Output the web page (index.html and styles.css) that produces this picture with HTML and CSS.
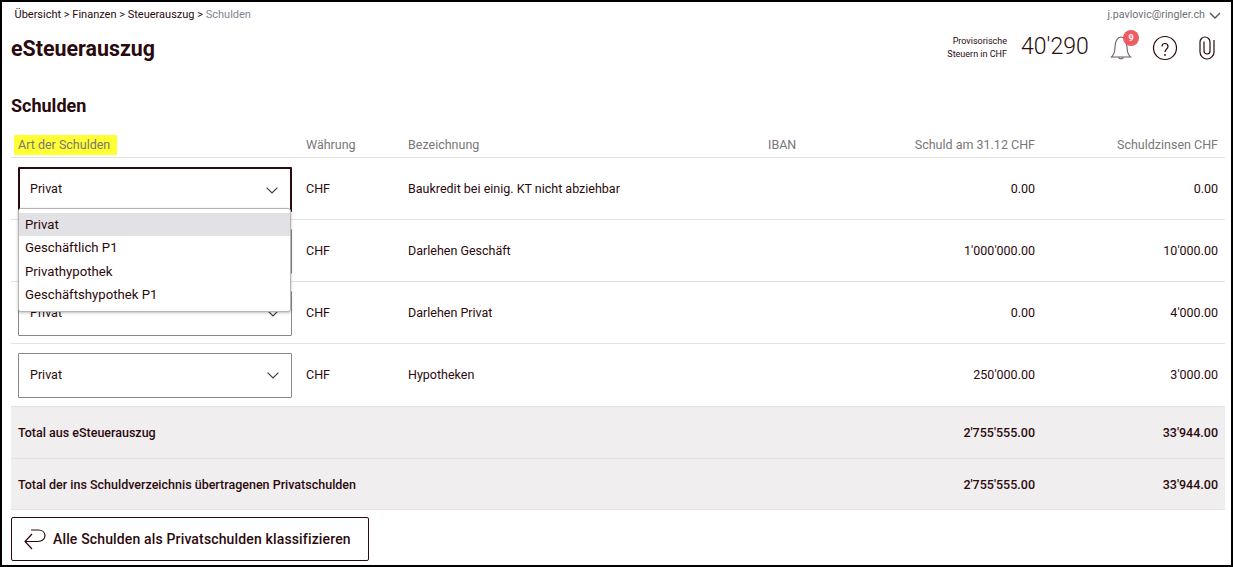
FILE: index.html
```html
<!DOCTYPE html>
<html lang="de">
<head>
<meta charset="utf-8">
<title>eSteuerauszug</title>
<link rel="stylesheet" href="styles.css">
</head>
<body>
<div class="frame">
  <header class="top">
    <div class="top-left">
      <nav class="crumbs">Übersicht &gt; Finanzen &gt; Steuerauszug &gt; <span class="crumb-current">Schulden</span></nav>
      <h1 class="title">eSteuerauszug</h1>
    </div>
    <div class="top-right">
      <div class="user">j.pavlovic@ringler.ch
        <svg class="user-chevron" width="12" height="7" viewBox="0 0 12 7"><path d="M1 1l5 5 5-5" fill="none" stroke="#555" stroke-width="1.4"/></svg>
      </div>
      <div class="tools">
        <div class="tax-label">Provisorische<br>Steuern in CHF</div>
        <div class="tax-value">40'290</div>
        <div class="bell">
          <svg width="26" height="28" viewBox="0 0 26 28"><path d="M2.500 24c2.500-2.500 3.500-5 3.500-10 0-5.500 2.500-10 6-10s6 4.500 6 10c0 5 1 7.500 3.500 10z M9.500 24c.3 2.500 4.700 2.500 5 0" fill="none" stroke="#6b5f60" stroke-width="1.100"/></svg>
          <span class="badge">9</span>
        </div>
        <svg class="help" width="26" height="26" viewBox="0 0 26 26"><circle cx="13" cy="13" r="11.500" fill="none" stroke="#2b0a0d" stroke-width="1.200"/><path d="M10 11.500c0-2 1.300-3 3-3s3 1.200 3 3c0 2.500-3 2.500-3 5.500" fill="none" stroke="#2b0a0d" stroke-width="1.200"/><circle cx="13" cy="20" r=".9" fill="#2b0a0d"/></svg>
        <svg class="clip" width="16" height="24" viewBox="0 0 16 24"><path d="M15 4v12a7 7 0 0 1-14 0V6a5 5 0 0 1 10 0v9a3 3 0 0 1-6 0V5.500" fill="none" stroke="#2b0a0d" stroke-width="1.200"/></svg>
      </div>
    </div>
  </header>

  <h2 class="section">Schulden</h2>

  <div class="table">
    <div class="row head">
      <div class="cell first"><span class="mark">Art der Schulden</span></div>
      <div class="cell">Währung</div>
      <div class="cell">Bezeichnung</div>
      <div class="cell iban">IBAN<span class="num">Schuld am 31.12 CHF</span></div>
      <div class="cell num last">Schuldzinsen CHF</div>
    </div>
    <div class="row body">
      <div class="cell first"><div class="select open">Privat<svg class="chev" width="12" height="7" viewBox="0 0 12 7"><path d="M.6.6L6 6 11.400.6" fill="none" stroke="#4a3a3c" stroke-width="1.200"/></svg></div></div>
      <div class="cell">CHF</div>
      <div class="cell wide">Baukredit bei einig. KT nicht abziehbar</div>
      <div class="cell num">0.00</div>
      <div class="cell num last">0.00</div>
    </div>
    <div class="row body">
      <div class="cell first"><div class="select">Privat<svg class="chev" width="12" height="7" viewBox="0 0 12 7"><path d="M.6.6L6 6 11.400.6" fill="none" stroke="#4a3a3c" stroke-width="1.200"/></svg></div></div>
      <div class="cell">CHF</div>
      <div class="cell wide">Darlehen Geschäft</div>
      <div class="cell num">1'000'000.00</div>
      <div class="cell num last">10'000.00</div>
    </div>
    <div class="row body">
      <div class="cell first"><div class="select">Privat<svg class="chev" width="12" height="7" viewBox="0 0 12 7"><path d="M.6.6L6 6 11.400.6" fill="none" stroke="#4a3a3c" stroke-width="1.200"/></svg></div></div>
      <div class="cell">CHF</div>
      <div class="cell wide">Darlehen Privat</div>
      <div class="cell num">0.00</div>
      <div class="cell num last">4'000.00</div>
    </div>
    <div class="row body body-last">
      <div class="cell first"><div class="select">Privat<svg class="chev" width="12" height="7" viewBox="0 0 12 7"><path d="M.6.6L6 6 11.400.6" fill="none" stroke="#4a3a3c" stroke-width="1.200"/></svg></div></div>
      <div class="cell">CHF</div>
      <div class="cell wide">Hypotheken</div>
      <div class="cell num">250'000.00</div>
      <div class="cell num last">3'000.00</div>
    </div>
    <div class="row total total-first">
      <div class="cell first span-label">Total aus eSteuerauszug</div>
      <div class="cell num">2'755'555.00</div>
      <div class="cell num last">33'944.00</div>
    </div>
    <div class="row total">
      <div class="cell first span-label">Total der ins Schuldverzeichnis übertragenen Privatschulden</div>
      <div class="cell num">2'755'555.00</div>
      <div class="cell num last">33'944.00</div>
    </div>

    <ul class="menu">
      <li class="menu-item active">Privat</li>
      <li class="menu-item">Geschäftlich P1</li>
      <li class="menu-item">Privathypothek</li>
      <li class="menu-item">Geschäftshypothek P1</li>
    </ul>
  </div>

  <button class="action" type="button">
    <svg width="22" height="21" viewBox="0 0 22 21"><path d="M7 1h7c5 0 7 3 7 5.500 0 3.500-3 6-7 6H1 M8 5L1 12.500 8 20" fill="none" stroke="#2b0a0d" stroke-width="1.200"/></svg>
    Alle Schulden als Privatschulden klassifizieren
  </button>
</div>
</body>
</html>
```
FILE: styles.css
```css
* { box-sizing: border-box; }
html, body { margin: 0; padding: 0; background: #fff; }
body { font-family: Roboto, "Liberation Sans", sans-serif; color: #2b0a0d; }

.frame {
  width: 1233px;
  height: 567px;
  border: 2px solid #000;
  padding: 0 6px 0 9px;
  overflow: hidden;
}

.top { display: flex; justify-content: space-between; height: 62px; }
.top-left { padding-top: 6px; }
.crumbs { font-size: 11px; line-height: 14px; padding-left: 3.500px; color: #2b0a0d; }
.crumb-current { color: #7d8594; }
.title { margin: 13px 0 0; font-size: 21.400px; line-height: 28px; font-weight: 700; }

.top-right { display: flex; flex-direction: column; align-items: flex-end; padding-top: 6px; padding-right: 4px; }
.user { font-size: 10.700px; line-height: 14px; color: #6f7078; display: flex; align-items: center; gap: 4px; }
.tools { display: flex; align-items: center; margin-top: 8px; height: 36px; padding-right: 6px; }
.tax-label { font-size: 9px; line-height: 13px; text-align: right; padding-top: 2px; }
.tax-value { font-size: 23px; font-weight: 300; margin-left: 14px; width: 68px; line-height: 28px; }
.bell { position: relative; width: 26px; height: 28px; margin-left: 20px; }
.badge {
  position: absolute; top: -3px; left: 14px;
  width: 16px; height: 16px; border-radius: 50%;
  background: #ef5b63; color: #fff;
  font-size: 9px; font-weight: 700; line-height: 16px; text-align: center;
}
.help { margin-left: 17px; margin-top: 1px; }
.clip { margin-left: 21px; margin-top: 1px; }

.section { margin: 30px 0 0; font-size: 18px; line-height: 24px; font-weight: 700; }

.table { position: relative; margin-top: 13px; width: 1214px; }
.row {
  display: grid;
  grid-template-columns: 295px 102px 360px 267px 190px;
  align-items: center;
  border-bottom: 1px solid #e4e3e4;
  font-size: 12.500px;
}
.head { height: 27px; color: #7b7678; }
.body { height: 62px; }
.body-last { height: 63px; padding-bottom: 1px; }
.total { height: 51px; background: #f0eeef; font-weight: 500; grid-template-columns: 1024px 0 190px; }
.total-first { height: 52px; }
.total .span-label { grid-column: 1; }
.total .num { grid-column: 1; }
.total .num.last { grid-column: 3; }
.total .num:not(.last) { justify-self: end; }
.total .span-label, .total .num { grid-row: 1; }

.first { padding-left: 7px; }
.last { padding-right: 7px; }
.num { text-align: right; }
.iban { display: flex; justify-content: space-between; }
.mark { display: block; width: fit-content; margin: 2px 0 0 -4px; background: #ffff33; padding: 0 7px 0 4px; line-height: 20px; }

.select {
  position: relative;
  width: 274px; height: 45px;
  margin-top: 1px;
  border: 1px solid #8a8587;
  border-radius: 1px;
  padding-left: 11px;
  line-height: 41px;
}
.body-last .select { margin-top: 2px; }
.select.open { border: 2px solid #2b0a0d; line-height: 39px; padding-left: 10px; }
.chev { position: absolute; right: 12px; top: 18px; }
.select.open .chev { right: 12px; top: 18px; }

.menu {
  position: absolute; left: 7px; top: 77px;
  width: 273px; height: 104px;
  margin: 0; padding: 3.700px 0 0;
  list-style: none;
  background: #fff;
  border: 1px solid #b5b3b5;
  border-radius: 3px;
  box-shadow: 0 1px 3px rgba(0,0,0,.25);
  z-index: 2;
  font-size: 13.200px;
}
.menu-item { height: 23.500px; line-height: 23px; padding-left: 6px; }
.menu-item.active { background: #e2e1e6; }

.action {
  display: flex; align-items: center; gap: 7px;
  margin-top: 7px;
  width: 358px; height: 44px;
  padding: 0 0 0 12px;
  background: #fff;
  border: 1px solid #2b0a0d;
  border-radius: 2px;
  color: #2b0a0d;
  font-family: inherit; font-size: 14px; font-weight: 500; letter-spacing: .15px;
}
```
